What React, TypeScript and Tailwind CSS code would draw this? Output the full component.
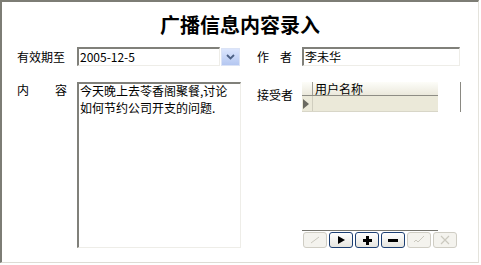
import React from "react";

const font = { fontFamily: '"Noto Sans CJK SC", "Liberation Sans", sans-serif' };

function NavButton({ enabled, children }: { enabled: boolean; children: React.ReactNode }) {
  return (
    <div
      className={
        enabled
          ? "flex h-[16px] w-[24px] items-center justify-center rounded-[3px] border border-[#1d3f72] bg-gradient-to-b from-white to-[#e6e5df]"
          : "flex h-[16px] w-[24px] items-center justify-center rounded-[3px] border border-[#cfcdc4] bg-[#f4f3ee]"
      }
    >
      {children}
    </div>
  );
}

export default function App() {
  return (
    <div className="h-[265px] w-[481px] bg-white text-[12px] leading-[14px] text-black" style={font}>
      <div className="flex h-[263px] w-[479px] flex-col border-t-2 border-l-2 border-r border-b border-t-[#7d7d75] border-l-[#7d7d75] border-r-[#e4e3dc] border-b-[#dddcd5] bg-white">
        <h1 className="mt-[9px] h-[28px] text-center text-[20px] font-bold leading-[28px]">广播信息内容录入</h1>

        {/* row 1 */}
        <div className="mt-[8px] flex h-[19px] items-center pl-[15px]">
          <div className="flex w-[60px] justify-start">有效期至</div>
          <div className="flex h-[19px] w-[143px] items-center border-t-2 border-l-2 border-r border-b border-t-[#80807a] border-l-[#80807a] border-r-[#eeede8] border-b-[#eeede8] pl-[1px]">
            2005-12-5
          </div>
          <div className="ml-[1px] flex h-[18px] w-[19px] items-center justify-center border border-[#dbe3f5] bg-gradient-to-b from-[#dce6fd] to-[#b4c7f1]">
            <svg width="9" height="6" viewBox="0 0 9 6">
              <path d="M1 1 L4.5 4.5 L8 1" fill="none" stroke="#4d6185" strokeWidth="1.8" />
            </svg>
          </div>
          <div className="ml-[17px] flex w-[35px] justify-between">
            <span>作</span>
            <span>者</span>
          </div>
          <div className="ml-[10px] flex h-[19px] w-[158px] items-center border-t-2 border-l-2 border-r border-b border-t-[#80807a] border-l-[#80807a] border-r-[#eeede8] border-b-[#eeede8] pl-[1px]">
            李未华
          </div>
        </div>

        {/* row 2 */}
        <div className="mt-[16px] flex pl-[15px]">
          <div className="flex w-[50px] justify-between pt-[1px]">
            <span>内</span>
            <span>容</span>
          </div>
          <div className="ml-[10px] h-[166px] w-[164px] border-t-2 border-l-2 border-r border-b border-t-[#80807a] border-l-[#80807a] border-r-[#eeede8] border-b-[#eeede8] pl-[1px] leading-[17px]">
            <div className="-mt-[2px]">今天晚上去苓香阁聚餐,讨论</div>
            <div>如何节约公司开支的问题.</div>
          </div>
          <div className="ml-[16px] w-[45px] pt-[6px]">接受者</div>
          <div className="flex h-[166px] w-[160px] flex-col">
            <div className="flex">
              <div className="flex w-[136px] flex-col border-b border-[#d8d6c8]">
                <div className="flex h-[14px] border-b border-[#8e8d85] bg-gradient-to-b from-[#fdfdf9] to-[#ebe9dc]">
                  <div className="w-[11px] border-r border-[#a09f97]" />
                  <div className="pl-[2px] leading-[13px]">用户名称</div>
                </div>
                <div className="flex h-[15px] bg-[#ebe9d9]">
                  <div className="flex w-[11px] items-center border-r border-[#d0cebf] pl-[1px]">
                    <svg width="6" height="10" viewBox="0 0 6 10">
                      <path d="M0 0 L6 5 L0 10 Z" fill="#6b6a62" />
                    </svg>
                  </div>
                </div>
              </div>
              <div className="ml-[22px] h-[30px] border-l border-[#8a8982]" />
            </div>
            <div className="mt-auto w-[136px] border-t border-[#76756e]" />
            <div className="mt-[1px] flex gap-[2px] pl-[1px]">
              <NavButton enabled={false}>
                <svg width="12" height="10" viewBox="0 0 12 10">
                  <path d="M2 8 L10 2" stroke="#cbc9bf" strokeWidth="1" />
                </svg>
              </NavButton>
              <NavButton enabled>
                <svg width="8" height="8" viewBox="0 0 8 8">
                  <path d="M1 0 L8 4 L1 8 Z" fill="#000" />
                </svg>
              </NavButton>
              <NavButton enabled>
                <svg width="9" height="9" viewBox="0 0 9 9">
                  <path d="M3 0 H6 V3 H9 V6 H6 V9 H3 V6 H0 V3 H3 Z" fill="#000" />
                </svg>
              </NavButton>
              <NavButton enabled>
                <svg width="10" height="3" viewBox="0 0 10 3">
                  <rect width="10" height="3" fill="#000" />
                </svg>
              </NavButton>
              <NavButton enabled={false}>
                <svg width="12" height="10" viewBox="0 0 12 10">
                  <path d="M1 7 L3 5 L5 7 L11 1" fill="none" stroke="#cbc9bf" strokeWidth="1" />
                </svg>
              </NavButton>
              <NavButton enabled={false}>
                <svg width="10" height="10" viewBox="0 0 10 10">
                  <path d="M1 1 L9 9 M9 1 L1 9" stroke="#cbc9bf" strokeWidth="1.2" />
                </svg>
              </NavButton>
            </div>
          </div>
        </div>
      </div>
    </div>
  );
}
